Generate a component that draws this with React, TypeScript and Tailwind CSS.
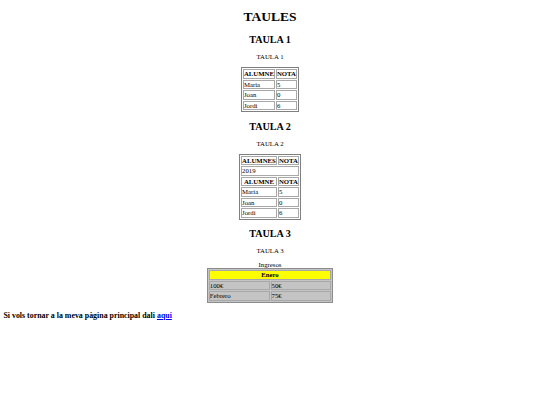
const alumnes = [
  { nom: 'Maria', nota: '5' },
  { nom: 'Joan', nota: '0' },
  { nom: 'Jordi', nota: '6' },
];

const cell = 'border border-[#a8a8a8] px-0 py-0 leading-[7px] h-[9.5px]';
const head = `${cell} font-bold text-center`;

const App = () => {
  return (
    <div className="min-h-[405px] bg-white px-[3.4px] text-[6.75px] leading-[normal] text-black font-['Liberation_Serif',_'Times_New_Roman',_serif]">
      <h1 className="mt-[9px] mb-[9px] text-center text-[13.5px] font-bold">TAULES</h1>

      {/* taula 1 */}
      <h2 className="my-[8.4px] text-center text-[10.125px] font-bold">TAULA 1</h2>
      <p className="my-[6.75px] text-center">TAULA 1</p>
      <table className="mx-auto border border-[#808080] border-separate border-spacing-[1px]">
        <tbody>
          <tr>
            <th className={head}>ALUMNE</th>
            <th className={head}>NOTA</th>
          </tr>
          {alumnes.map((a) => (
            <tr key={a.nom}>
              <td className={cell}>{a.nom}</td>
              <td className={cell}>{a.nota}</td>
            </tr>
          ))}
        </tbody>
      </table>

      {/* taula 2 */}
      <h2 className="my-[8.4px] text-center text-[10.125px] font-bold">TAULA 2</h2>
      <p className="my-[6.75px] text-center">TAULA 2</p>
      <table className="mx-auto border border-[#808080] border-separate border-spacing-[1px]">
        <tbody>
          <tr>
            <th className={head}>ALUMNES</th>
            <th className={head}>NOTA</th>
          </tr>
          <tr>
            <td colSpan={2} className={cell}>2019</td>
          </tr>
          <tr>
            <th className={head}>ALUMNE</th>
            <th className={head}>NOTA</th>
          </tr>
          {alumnes.map((a) => (
            <tr key={a.nom}>
              <td className={cell}>{a.nom}</td>
              <td className={cell}>{a.nota}</td>
            </tr>
          ))}
        </tbody>
      </table>

      {/* taula 3 */}
      <h2 className="my-[8.4px] text-center text-[10.125px] font-bold">TAULA 3</h2>
      <p className="my-[6.75px] text-center">TAULA 3</p>
      <table className="mx-auto w-[126.5px] border border-[#8c8c8c] bg-[#c4c4c4] border-separate border-spacing-[1px]">
        <caption className="text-center">Ingresos</caption>
        <tbody>
          <tr>
            <th colSpan={2} className={`${head} bg-[#ffff00]`}>Enero</th>
          </tr>
          <tr>
            <td className={`${cell} w-1/2`}>100€</td>
            <td className={`${cell} w-1/2`}>50€</td>
          </tr>
          <tr>
            <td className={`${cell} w-1/2`}>Febrero</td>
            <td className={`${cell} w-1/2`}>75€</td>
          </tr>
        </tbody>
      </table>

      <h3 className="my-[7.9px] text-[7.9px] font-bold">
        Si vols tornar a la meva pàgina principal dali{' '}
        <a href="#" className="text-[#0000ee] underline">aqui</a>
      </h3>
    </div>
  );
};

export default App;
